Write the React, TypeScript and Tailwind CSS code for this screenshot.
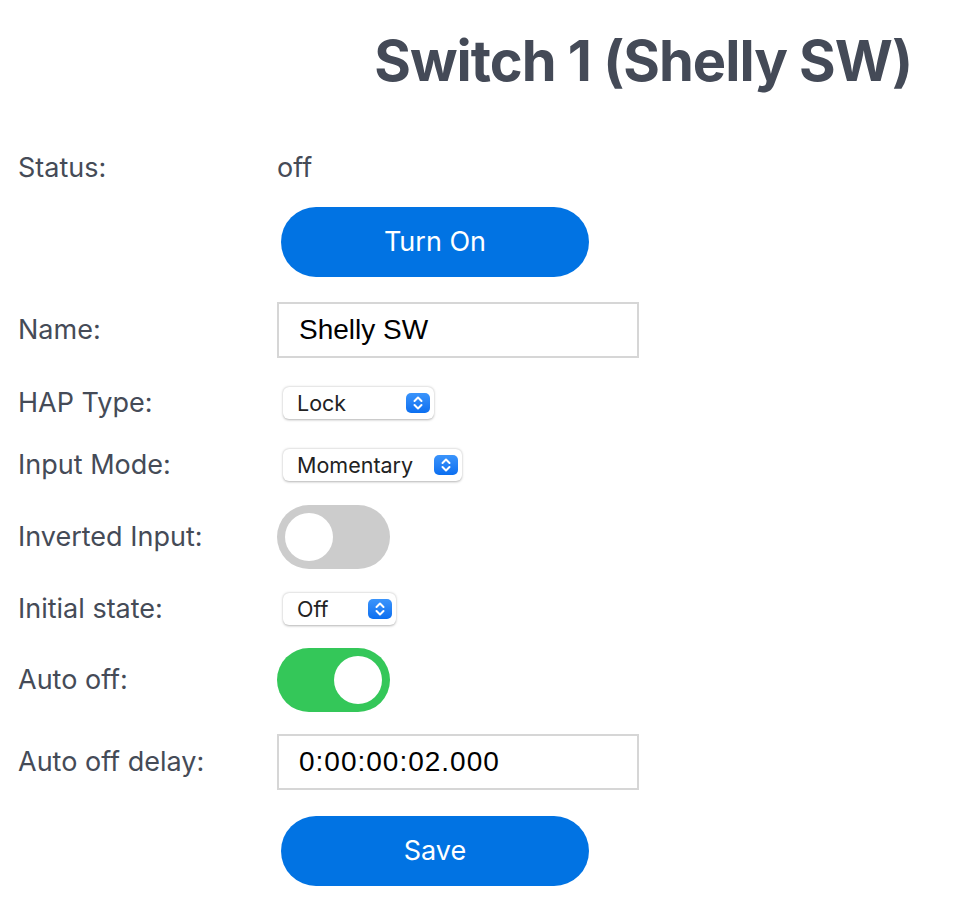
import { useState } from 'react';

const labelCls = "w-[277px] shrink-0 pl-[18px] text-[27px] text-[#454b57]";

function Chevrons() {
  return (
    <span className="flex h-[20px] w-[24px] items-center justify-center rounded-[5px] bg-gradient-to-b from-[#3a94fb] to-[#0a6ff0]">
      <svg width="12" height="16" viewBox="0 0 12 16" fill="none">
        <path d="M2.5 6 L6 2.5 L9.5 6" stroke="white" strokeWidth="2" strokeLinecap="round" strokeLinejoin="round" />
        <path d="M2.5 10 L6 13.5 L9.5 10" stroke="white" strokeWidth="2" strokeLinecap="round" strokeLinejoin="round" />
      </svg>
    </span>
  );
}

function Select({ value, width }: { value: string; width: string }) {
  return (
    <div className={`ml-[6px] flex h-[32px] items-center justify-between rounded-[6px] bg-white pl-[14px] pr-[4px] text-[21.5px] text-[#222] shadow-[0_0.5px_2.5px_rgba(0,0,0,0.3)] ${width}`}>
      <span>{value}</span>
      <Chevrons />
    </div>
  );
}

function Toggle({ on, onClick }: { on: boolean; onClick: () => void }) {
  return (
    <button
      onClick={onClick}
      className={`flex h-[64px] w-[113px] items-center rounded-full px-[8px] ${on ? 'justify-end bg-[#34c759]' : 'justify-start bg-[#cccccc]'}`}
    >
      <span className="block h-[48px] w-[48px] rounded-full bg-white" />
    </button>
  );
}

export default function App() {
  const [on, setOn] = useState(false);
  const [inverted, setInverted] = useState(false);
  const [autoOff, setAutoOff] = useState(true);

  return (
    <div className="min-h-[924px] bg-white font-['Inter',sans-serif]">
      {/* Title */}
      <h1 className="pr-[52px] pt-[25px] text-right text-[56px] font-bold leading-[72px] tracking-[-1px] text-[#444a57]">
        Switch 1 (Shelly SW)
      </h1>

      <div className="mt-[50px] flex flex-col">
        <div className="flex h-[40px] items-center pt-[2px]">
          <span className={labelCls}>Status:</span>
          <span className="text-[27px] text-[#454b57]">{on ? 'on' : 'off'}</span>
        </div>

        <div className="mt-[20px] flex">
          <span className="w-[281px] shrink-0" />
          <button
            onClick={() => setOn(!on)}
            className="h-[70px] w-[308px] rounded-full bg-[#0173e3] text-[27px] text-white"
          >
            {on ? 'Turn Off' : 'Turn On'}
          </button>
        </div>

        <div className="mt-[25px] flex h-[56px] items-center">
          <span className={labelCls}>Name:</span>
          <input
            defaultValue="Shelly SW"
            className="h-[56px] w-[362px] border-2 border-[#d6d6d6] px-[20px] font-['Liberation_Sans',sans-serif] text-[28px] text-black outline-none"
          />
        </div>

        <div className="mt-[29px] flex h-[32px] items-center">
          <span className={labelCls}>HAP Type:</span>
          <Select value="Lock" width="w-[151px]" />
        </div>

        <div className="mt-[30px] flex h-[32px] items-center">
          <span className={labelCls}>Input Mode:</span>
          <Select value="Momentary" width="w-[179px]" />
        </div>

        <div className="mt-[24px] flex h-[64px] items-center">
          <span className={labelCls}>Inverted Input:</span>
          <Toggle on={inverted} onClick={() => setInverted(!inverted)} />
        </div>

        <div className="mt-[24px] flex h-[32px] items-center">
          <span className={labelCls}>Initial state:</span>
          <Select value="Off" width="w-[113px]" />
        </div>

        <div className="mt-[23px] flex h-[64px] items-center">
          <span className={labelCls}>Auto off:</span>
          <Toggle on={autoOff} onClick={() => setAutoOff(!autoOff)} />
        </div>

        <div className="mt-[22px] flex h-[56px] items-center">
          <span className={labelCls}>Auto off delay:</span>
          <input
            defaultValue="0:00:00:02.000"
            className="h-[56px] w-[362px] border-2 border-[#d6d6d6] px-[20px] font-['Liberation_Sans',sans-serif] text-[28px] tracking-[1px] text-black outline-none"
          />
        </div>

        <div className="mt-[26px] flex">
          <span className="w-[281px] shrink-0" />
          <button className="h-[70px] w-[308px] rounded-full bg-[#0173e3] text-[27px] text-white">
            Save
          </button>
        </div>
      </div>
    </div>
  );
}
